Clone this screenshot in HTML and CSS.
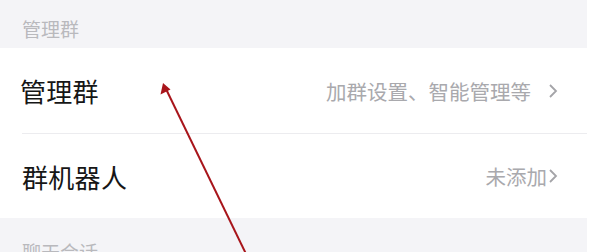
FILE: index.html
```html
<!DOCTYPE html>
<html lang="zh-CN">
<head>
<meta charset="utf-8">
<link rel="stylesheet" href="styles.css">
</head>
<body>
<div class="page">
  <div class="section-title">管理群</div>
  <div class="group">
    <div class="row">
      <span class="label">管理群</span>
      <span class="value">加群设置、智能管理等<svg class="chev chev-gap" viewBox="0 0 10 16"><polyline points="2,2 8,8 2,14"/></svg></span>
    </div>
    <div class="divider"></div>
    <div class="row">
      <span class="label">群机器人</span>
      <span class="value">未添加<svg class="chev" viewBox="0 0 10 16"><polyline points="2,2 8,8 2,14"/></svg></span>
    </div>
  </div>
  <div class="section-title section-bottom">聊天会话</div>
</div>
<svg class="arrow" viewBox="0 0 600 252" width="600" height="252">
  <line x1="248" y1="258" x2="166" y2="89" />
  <polygon points="163,83 160.5,94.5 170.5,89.5" />
</svg>
</body>
</html>
```
FILE: styles.css
```css
html, body {
  margin: 0;
  padding: 0;
  background: #ffffff;
  font-family: "Noto Sans CJK SC", "Noto Sans", sans-serif;
}
body {
  width: 600px;
  height: 252px;
  overflow: hidden;
  position: relative;
}
.page {
  width: 587px;
  background: #f4f4f7;
}
.section-title {
  height: 48px;
  box-sizing: border-box;
  padding: 19px 0 0 22px;
  font-size: 19px;
  line-height: 20px;
  color: #b9b9bd;
}
.section-bottom {
  padding-top: 24px;
  height: 34px;
  overflow: hidden;
}
.group {
  background: #ffffff;
}
.row {
  height: 85px;
  display: flex;
  align-items: center;
  justify-content: space-between;
  padding: 0 29px 0 20px;
}
.row + .divider + .row {
  height: 84px;
  padding-left: 22px;
}
.label {
  font-size: 26px;
  line-height: 30px;
  color: #161616;
  letter-spacing: 0.3px;
  padding-top: 1px;
}
.value {
  display: flex;
  align-items: center;
  font-size: 20.5px;
  line-height: 24px;
  color: #a9a9ad;
}
.chev {
  width: 10px;
  height: 16px;
  margin-left: 1px;
  fill: none;
  stroke: #a4a4a8;
  stroke-width: 1.8;
}
.chev-gap {
  margin-left: 17px;
}
.divider {
  height: 1px;
  margin-left: 22px;
  background: #ececef;
}
.arrow {
  position: absolute;
  left: 0;
  top: 0;
}
.arrow line {
  stroke: #a8151b;
  stroke-width: 2;
}
.arrow polygon {
  fill: #a8151b;
}
```
